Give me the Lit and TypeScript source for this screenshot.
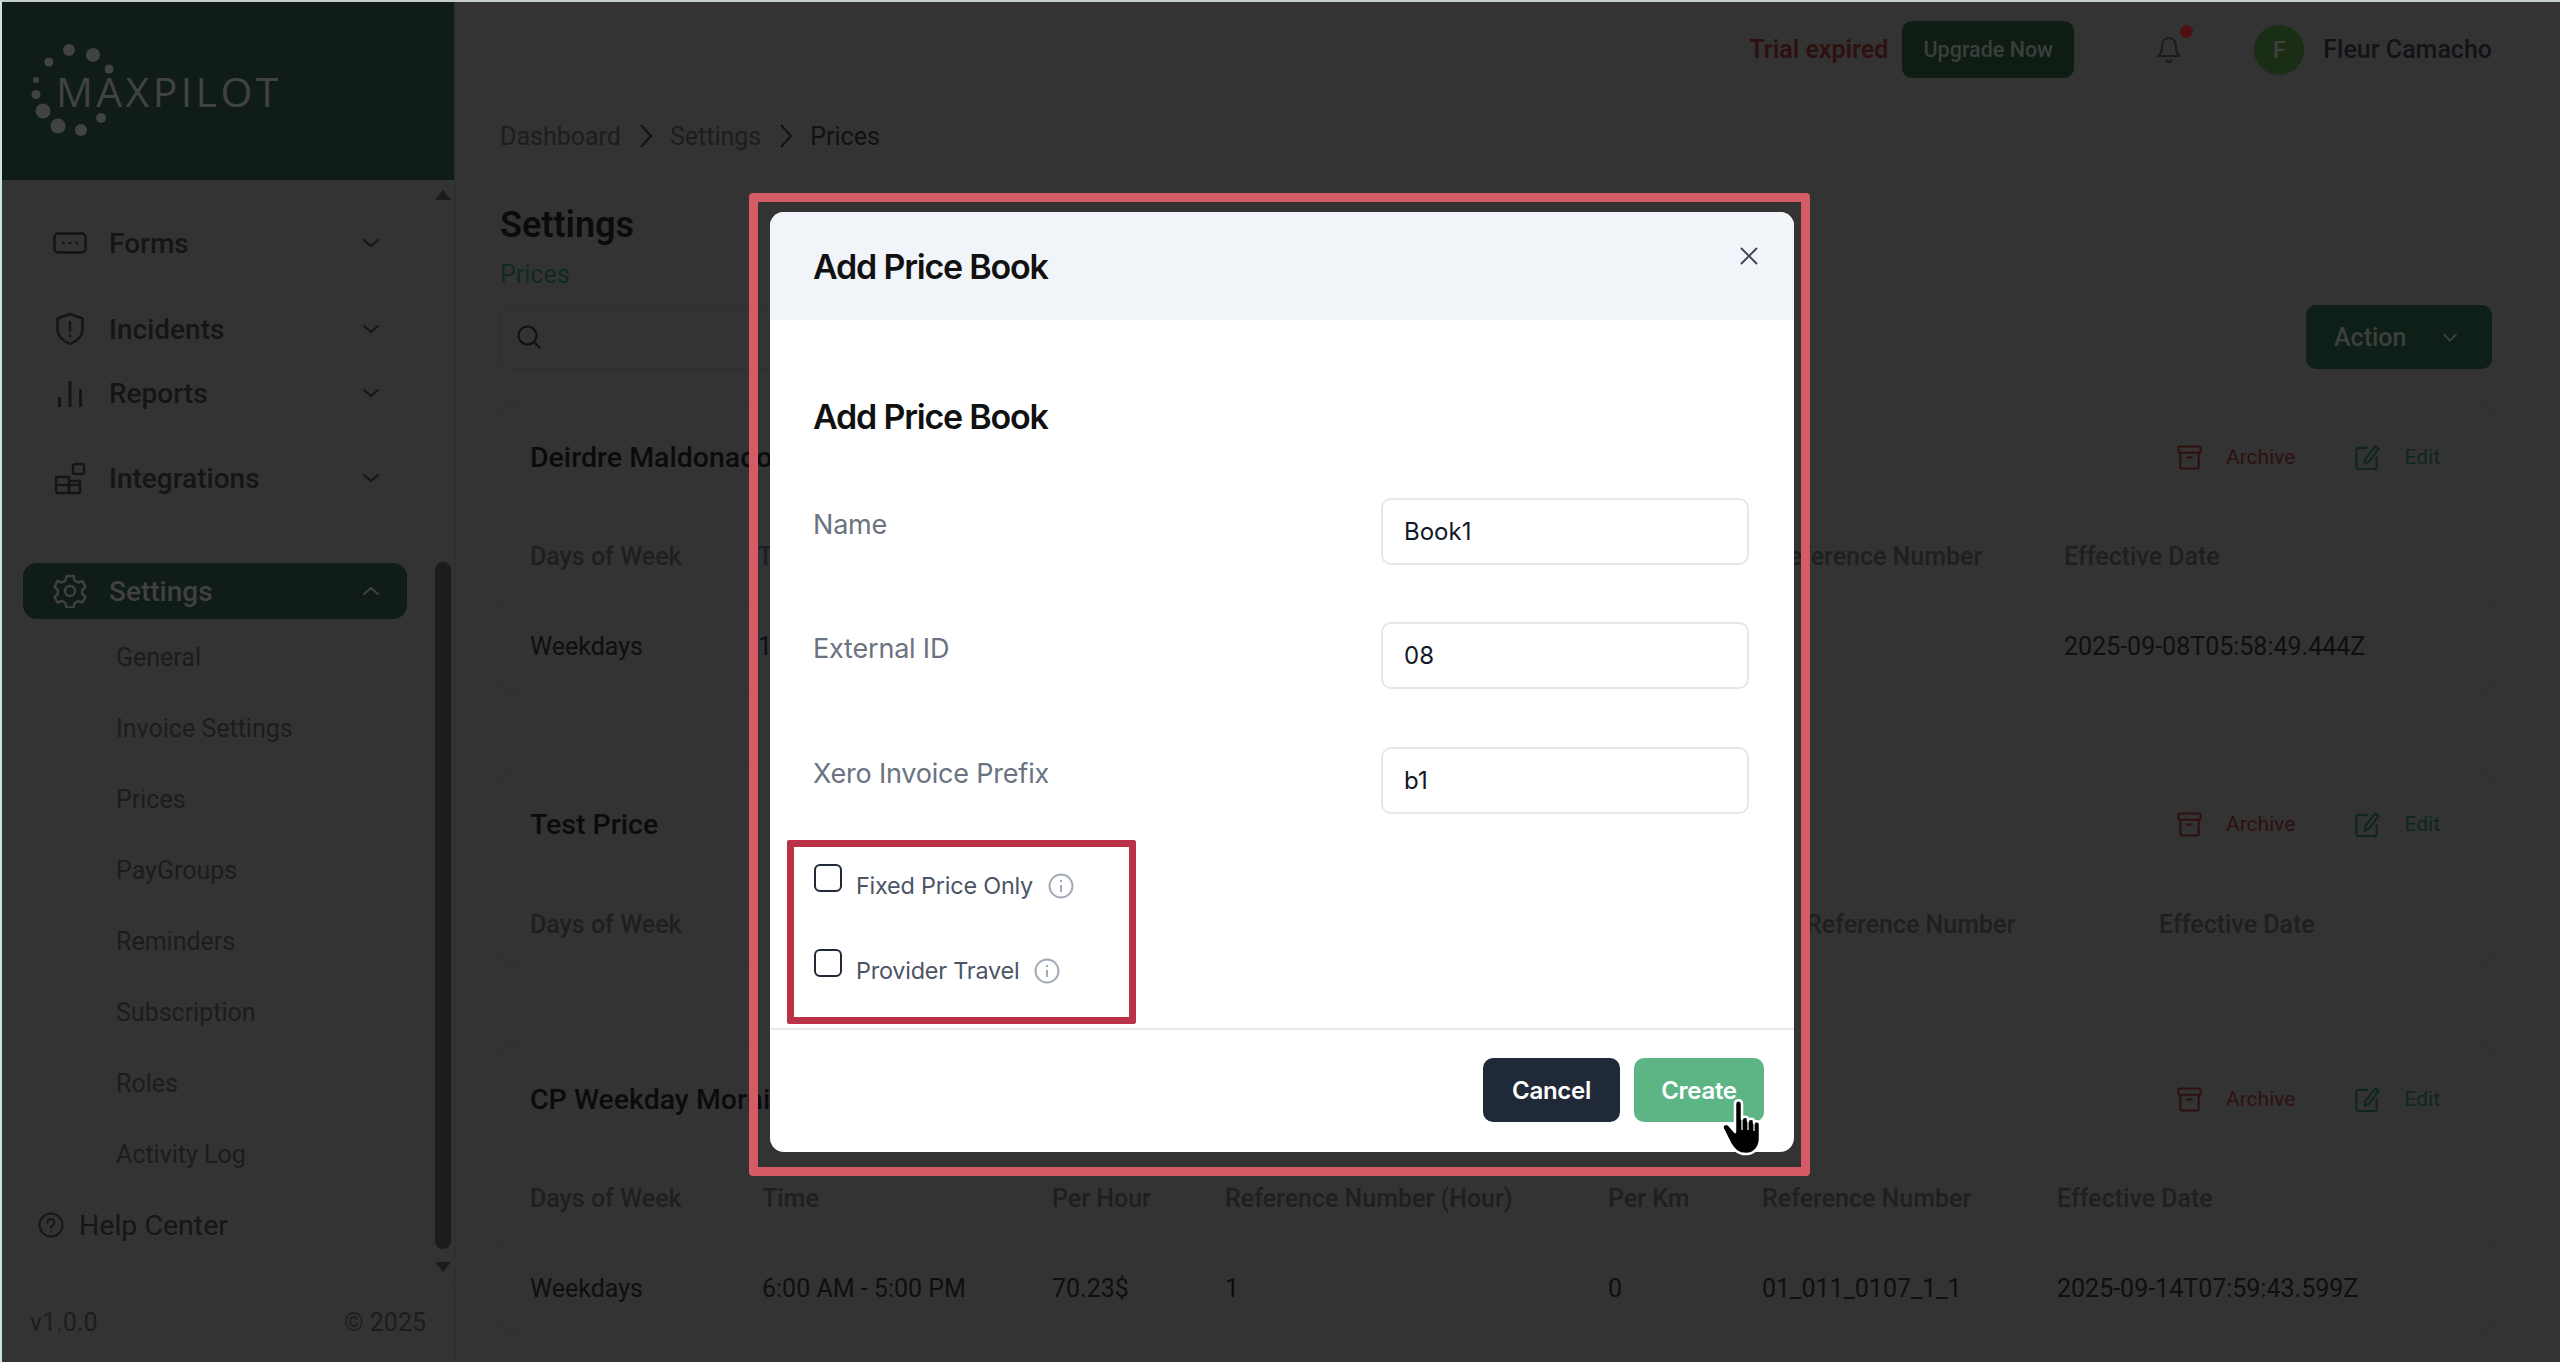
import { LitElement, html, css, svg } from "lit";
import { customElement } from "lit/decorators.js";

const chev = (up = false) => html`<svg class="chev" viewBox="0 0 20 20" fill="none" stroke="currentColor" stroke-width="2" stroke-linecap="round" stroke-linejoin="round"><path d=${up ? "M3 13l7-6 7 6" : "M3 7l7 6 7-6"}></path></svg>`;

const archiveIcon = html`<svg class="act-ic" viewBox="0 0 26 26" fill="none" stroke="currentColor" stroke-width="2.2" stroke-linejoin="round" stroke-linecap="round"><rect x="1.5" y="1.500" width="23" height="6.500" rx="1.5"></rect><path d="M3.500 8v14.500a2 2 0 0 0 2 2h15a2 2 0 0 0 2-2V8"></path><path d="M10.500 13h5"></path></svg>`;
const editIcon = html`<svg class="act-ic" viewBox="0 0 26 26" fill="none" stroke="currentColor" stroke-width="2.2" stroke-linejoin="round" stroke-linecap="round"><path d="M12 3H3.500a2 2 0 0 0-2 2v18a2 2 0 0 0 2 2h17a2 2 0 0 0 2-2V13"></path><path d="M21 1.500l3.500 2.500-10 13.500-4.500 2 .8-4.800z"></path></svg>`;
const info = html`<svg class="info" viewBox="0 0 26 26" fill="none" stroke="#a3aab8" stroke-width="2"><circle cx="13" cy="13" r="11.5"></circle><path d="M13 12v7" stroke-width="2"></path><circle cx="13" cy="8" r="1.2" fill="#a3aab8" stroke="none"></circle></svg>`;

const navIcons: Record<string, unknown> = {
  Forms: html`<svg class="nav-ic" viewBox="0 0 34 34" fill="none" stroke="currentColor" stroke-width="2.4" stroke-linecap="round"><rect x="1.5" y="7.500" width="31" height="19" rx="3.500"></rect><path d="M10 17h.5M16.800 17h.5M23.600 17h.5"></path></svg>`,
  Incidents: html`<svg class="nav-ic" viewBox="0 0 34 34" fill="none" stroke="currentColor" stroke-width="2.4" stroke-linecap="round" stroke-linejoin="round"><path d="M17 2l12.500 4.500v11c0 7-5.500 11.500-12.500 14.500-7-3-12.500-7.500-12.500-14.500v-11z"></path><path d="M17 10v9M17 23.500v.5"></path></svg>`,
  Reports: html`<svg class="nav-ic" viewBox="0 0 34 34" fill="none" stroke="currentColor" stroke-width="3" stroke-linecap="butt"><path d="M6.500 31v-10M17 31V5M27.500 31V13"></path></svg>`,
  Integrations: html`<svg class="nav-ic" viewBox="0 0 34 34" fill="none" stroke="currentColor" stroke-width="2.4" stroke-linejoin="round"><path d="M3 16h13v16H5a2 2 0 0 1-2-2z"></path><path d="M3 24h24"></path><path d="M16 24v8h9a2 2 0 0 0 2-2V20H16"></path><rect x="20" y="3" width="11" height="10" rx="2"></rect></svg>`,
  Settings: html`<svg class="nav-ic" viewBox="0 0 34 34" fill="none" stroke="currentColor" stroke-width="2.4" stroke-linejoin="round"><path d="M13.500 3h7l1 4.500 3.500 2 4.500-1.500 3 6-3.300 3v4l3.300 3-3 5.500-4.500-1.500-3.500 2-1 4.500h-7l-1-4.500-3.500-2-4.500 1.500-3-5.500 3.300-3v-4l-3.300-3 3-6 4.500 1.500 3.500-2z" transform="translate(0 -1)"></path><circle cx="17" cy="17" r="5"></circle></svg>`,
};

const dots: [number, number, number][] = [
  [68, 50, 6], [92, 55, 7], [48, 62, 4.5], [108, 69, 4.5], [35, 80, 3], [35, 94.5, 4.5], [42, 111, 7.5], [57, 126, 7.5], [80, 130, 6], [100, 118, 5],
];

interface Card {
  title: string;
  cols: [string, number][];
  row?: [string, number][];
  h: number;
}

const cards: Card[] = [
  {
    title: "Deirdre Maldonado",
    h: 293,
    cols: [["Days of Week", 29], ["Time", 257], ["Reference Number", 1272], ["Effective Date", 1563]],
    row: [["Weekdays", 29], ["1", 257], ["2025-09-08T05:58:49.444Z", 1563]],
  },
  {
    title: "Test Price",
    h: 199,
    cols: [["Days of Week", 29], ["Reference Number", 1305], ["Effective Date", 1658]],
  },
  {
    title: "CP Weekday Morning",
    h: 293,
    cols: [["Days of Week", 29], ["Time", 261], ["Per Hour", 551], ["Reference Number (Hour)", 724], ["Per Km", 1107], ["Reference Number", 1261], ["Effective Date", 1556]],
    row: [["Weekdays", 29], ["6:00 AM - 5:00 PM", 261], ["70.23$", 551], ["1", 724], ["0", 1107], ["01_011_0107_1_1", 1261], ["2025-09-14T07:59:43.599Z", 1556]],
  },
];

@customElement("app-root")
export class AppRoot extends LitElement {
  static styles = css`
    :host { display: block; width: 2560px; height: 1362px; overflow: hidden; position: relative; background: #333333; font-family: Roboto, "Liberation Sans", sans-serif; color: #111214; }
    * { box-sizing: border-box; }
    .page { display: flex; height: 1362px; border-top: 2px solid #c4ccce; border-left: 2px solid #cfe3de; }

    .side { width: 454px; flex: none; display: flex; flex-direction: column; border-right: 2px solid #303030; }
    .logo-box { height: 178px; flex: none; background: #101c17; }
    .logo { width: 300px; height: 178px; display: block; margin-left: -1px; }
    .logo-text { font-family: "Open Sans", sans-serif; font-size: 41px; letter-spacing: 3.400px; fill: #404341; font-weight: 500; }
    .side-body { flex: 1; position: relative; display: flex; flex-direction: column; min-height: 0; }
    .nav { flex: 1; display: flex; flex-direction: column; padding: 35px 0 0 21px; }
    .item { display: flex; align-items: center; width: 384px; height: 56px; padding: 0 26px 0 30px; font-size: 28px; font-weight: 500; color: #141517; border-radius: 14px; flex: none; }
    .item span { flex: 1; margin-left: 22px; }
    .nav-ic { width: 34px; height: 34px; flex: none; }
    .chev { width: 20px; height: 20px; flex: none; }
    .gap-a { margin-bottom: 30px; }
    .gap-b { margin-bottom: 8px; }
    .gap-c { margin-bottom: 29px; }
    .gap-d { margin-bottom: 57px; }
    .item.on { background: #101c17; color: #414141; margin-bottom: 3px; }
    .sub { height: 71px; display: flex; align-items: center; padding-left: 93px; font-size: 25px; color: #1b1c1e; flex: none; }
    .sub-list { display: flex; flex-direction: column; }
    .help { display: flex; align-items: center; gap: 15px; font-size: 28.500px; color: #151618; padding-left: 15px; height: 70px; flex: none; }
    .help svg { width: 26px; height: 26px; }
    .scroll { position: absolute; right: 3px; top: 0; bottom: 80px; width: 16px; }
    .arrow { position: absolute; left: 0; width: 0; height: 0; border-left: 8px solid transparent; border-right: 8px solid transparent; }
    .arrow.up { top: 10px; border-bottom: 10px solid #1c1c1c; }
    .arrow.down { bottom: 10px; border-top: 10px solid #1c1c1c; }
    .thumb { position: absolute; top: 382px; height: 687px; width: 16px; border-radius: 8px; background: #1c1c1c; }
    .foot { height: 80px; flex: none; border-top: 1px solid #303030; display: flex; justify-content: space-between; align-items: center; padding: 0 28px 0 28px; font-size: 25px; color: #1c1d1e; }

    .main { flex: 1; min-width: 0; display: flex; flex-direction: column; }
    .top { height: 96px; flex: none; border-bottom: 1px solid #303030; display: flex; align-items: center; padding: 0 68px 0 0; justify-content: flex-end; }
    .trial { color: #2e1010; font-weight: 600; font-size: 25px; margin-right: 14px; }
    .upgrade { width: 172px; height: 57px; border-radius: 10px; background: #0f1c14; color: #3b3f3c; display: flex; align-items: center; justify-content: center; font-size: 21.500px; font-weight: 500; }
    .bell { position: relative; margin-left: 82px; width: 26px; height: 30px; }
    .bell svg { width: 26px; height: 30px; display: block; }
    .bell i { position: absolute; top: -10px; right: -11px; width: 13px; height: 13px; border-radius: 50%; background: #4e1010; }
    .avatar { width: 50px; height: 50px; margin-left: 72px; border-radius: 50%; background: #1a2e16; color: #3f3f3f; display: flex; align-items: center; justify-content: center; font-size: 24px; font-weight: 500; }
    .uname { margin-left: 19px; font-size: 25px; font-weight: 500; color: #121318; }

    .content { padding: 0 68px 0 44px; flex: 1; }
    .crumbs { display: flex; align-items: center; height: 34px; margin-top: 21px; font-size: 25px; color: #1c1d1e; }
    .crumbs b { font-weight: 400; color: #101113; }
    .crumbs svg { width: 16px; height: 26px; margin: 0 16px 0 17px; color: #111214; }
    h1 { margin: 48px 0 0; font-size: 36px; line-height: 48px; font-weight: 600; color: #0a0b0c; }
    .subt { font-size: 25px; color: #10291e; margin-top: 12px; line-height: 28px; }
    .tools { display: flex; justify-content: space-between; margin-top: 16px; height: 64px; }
    .search { width: 640px; height: 64px; border: 1px solid #2e2e2e; border-radius: 10px; display: flex; align-items: center; padding-left: 14px; }
    .search svg { width: 28px; height: 28px; color: #111214; }
    .action { width: 186px; height: 64px; border-radius: 10px; background: #0e1f17; color: #3c3f3d; display: flex; align-items: center; font-size: 25px; font-weight: 500; padding-left: 28px; }
    .action svg { width: 18px; height: 18px; margin-left: 35px; }

    .card { position: relative; border: 1px solid #2f2f2f; border-radius: 14px; }
    .c0 { margin-top: 31px; }
    .c1 { margin-top: 74px; }
    .c2 { margin-top: 76px; }
    .card-head { display: flex; align-items: center; height: 112px; padding: 0 51px 0 29px; }
    .card-title { font-size: 28.500px; font-weight: 500; color: #0b0b0c; flex: 1; white-space: nowrap; }
    .act { display: flex; align-items: center; font-size: 21px; }
    .act-ic { width: 25px; height: 25px; margin-right: 24px; }
    .act.red { color: #2e1010; margin-right: 60px; }
    .act.green { color: #0f261b; }
    .tr { position: relative; }
    .tr.hd { height: 88px; border-bottom: 1px solid #2f2f2f; color: #1e1f21; font-weight: 500; font-size: 25px; }
    .tr.bd { font-size: 25px; color: #0e0f10; height: 91px; }
    .cell { position: absolute; top: 0; bottom: 0; display: flex; align-items: center; white-space: nowrap; }
    .c1 .tr.hd { border-bottom: none; }

    .frame { position: absolute; left: 749px; top: 193px; width: 1061px; height: 983px; border: 9px solid #d55b67; border-radius: 4px; }
    .modal { position: absolute; left: 770px; top: 212px; width: 1024px; height: 940px; background: #fff; border-radius: 14px; overflow: hidden; font-family: Inter, sans-serif; display: flex; flex-direction: column; }
    .m-head { height: 108px; flex: none; background: #f1f5f9; padding: 0 43px; display: flex; align-items: center; position: relative; }
    .m-title { font-size: 34px; font-weight: 600; color: #111; letter-spacing: -1.200px; }
    .x { position: absolute; right: 36px; top: 35px; width: 18px; height: 18px; }
    .m-body { flex: 1; padding: 77px 45px 0 43px; display: flex; flex-direction: column; position: relative; }
    .m-body .m-title { line-height: 40px; }
    .fields { display: flex; flex-direction: column; gap: 57.400px; margin-top: 61px; }
    .field { display: flex; justify-content: space-between; height: 67px; }
    .field label { font-size: 27px; color: #6b7280; line-height: 53px; letter-spacing: -0.200px; }
    .inp { width: 368px; height: 67px; border: 2px solid #e5e7eb; border-radius: 10px; padding-left: 21px; display: flex; align-items: center; font-size: 24px; color: #111827; }
    .checks { position: absolute; left: 17px; top: 520px; width: 349px; height: 184px; border: 7px solid #b93246; border-radius: 2px; padding: 17px 0 0 20px; display: flex; flex-direction: column; gap: 57px; }
    .chk { display: flex; align-items: flex-start; height: 28px; font-size: 23.400px; color: #4b5563; letter-spacing: -0.200px; }
    .box { width: 28px; height: 28px; border: 2px solid #1f2937; border-radius: 6px; flex: none; margin-right: 14px; }
    .chk span { line-height: 32px; margin-top: 6px; }
    .info { width: 26px; height: 26px; margin-left: 15px; margin-top: 9px; flex: none; }
    .m-foot { height: 124px; flex: none; border-top: 2px solid #e8eaed; display: flex; justify-content: flex-end; align-items: flex-start; gap: 14px; padding: 28px 30px 0 0; }
    .btn { height: 64px; border-radius: 10px; display: flex; align-items: center; justify-content: center; color: #fff; font-size: 24px; font-weight: 600; letter-spacing: -0.300px; }
    .cancel { width: 137px; background: #1f2937; }
    .create { width: 130px; background: #5db585; }
    .cursor { position: absolute; left: 1720px; top: 1098px; width: 44px; height: 60px; }
  `;

  private card(c: Card, i: number) {
    return html`<div class="card c${i}" style="height:${c.h}px">
      <div class="card-head">
        <div class="card-title">${c.title}</div>
        <div class="act red">${archiveIcon}Archive</div>
        <div class="act green">${editIcon}Edit</div>
      </div>
      <div class="tr hd">${c.cols.map(([t, x]) => html`<div class="cell" style="left:${x}px">${t}</div>`)}</div>
      ${c.row ? html`<div class="tr bd">${c.row.map(([t, x]) => html`<div class="cell" style="left:${x}px">${t}</div>`)}</div>` : ""}
    </div>`;
  }

  render() {
    const subs = ["General", "Invoice Settings", "Prices", "PayGroups", "Reminders", "Subscription", "Roles", "Activity Log"];
    return html`
      <div class="page">
        <aside class="side">
          <div class="logo-box">
            <svg class="logo" viewBox="0 0 300 178">
              ${dots.map(([x, y, r]) => svg`<circle cx=${x} cy=${y - 2} r=${r} fill="#404341"></circle>`)}
              <text class="logo-text" x="55" y="105">MAXPILOT</text>
            </svg>
          </div>
          <div class="side-body">
            <div class="nav">
              <div class="item gap-a">${navIcons.Forms}<span>Forms</span>${chev()}</div>
              <div class="item gap-b">${navIcons.Incidents}<span>Incidents</span>${chev()}</div>
              <div class="item gap-c">${navIcons.Reports}<span>Reports</span>${chev()}</div>
              <div class="item gap-d">${navIcons.Integrations}<span>Integrations</span>${chev()}</div>
              <div class="item on">${navIcons.Settings}<span>Settings</span>${chev(true)}</div>
              <div class="sub-list">${subs.map((s) => html`<div class="sub">${s}</div>`)}</div>
              <div class="help">
                <svg viewBox="0 0 26 26" fill="none" stroke="currentColor" stroke-width="2"><circle cx="13" cy="13" r="11.500"></circle><path d="M9.500 10.500a3.500 3.500 0 1 1 5.500 2.800c-1.200.8-2 1.400-2 2.700" stroke-linecap="round"></path><circle cx="13" cy="19.500" r="1" fill="currentColor" stroke="none"></circle></svg>
                Help Center
              </div>
            </div>
            <div class="scroll"><i class="arrow up"></i><div class="thumb"></div><i class="arrow down"></i></div>
            <div class="foot"><span>v1.0.0</span><span>© 2025</span></div>
          </div>
        </aside>
        <main class="main">
          <header class="top">
            <span class="trial">Trial expired</span>
            <div class="upgrade">Upgrade Now</div>
            <div class="bell">
              <svg viewBox="0 0 34 40" fill="none" stroke="#1a1b1d" stroke-width="2.800" stroke-linejoin="round" stroke-linecap="round"><path d="M17 4c-6 0-9 4.500-9 10 0 7-2 11-5 14h28c-3-3-5-7-5-14 0-5.500-3-10-9-10z"></path><path d="M14 34c1 2.500 5 2.500 6 0"></path></svg>
              <i></i>
            </div>
            <div class="avatar">F</div>
            <div class="uname">Fleur Camacho</div>
          </header>
          <div class="content">
            <div class="crumbs">
              <span>Dashboard</span>
              <svg viewBox="0 0 16 26" fill="none" stroke="currentColor" stroke-width="2"><path d="M3 2l10 11L3 24"></path></svg>
              <span>Settings</span>
              <svg viewBox="0 0 16 26" fill="none" stroke="currentColor" stroke-width="2"><path d="M3 2l10 11L3 24"></path></svg>
              <b>Prices</b>
            </div>
            <h1>Settings</h1>
            <div class="subt">Prices</div>
            <div class="tools">
              <div class="search"><svg viewBox="0 0 28 28" fill="none" stroke="currentColor" stroke-width="2.200" stroke-linecap="round"><circle cx="12.500" cy="12.500" r="9"></circle><path d="M19.500 19.500l5 5"></path></svg></div>
              <div class="action">Action <svg viewBox="0 0 20 20" fill="none" stroke="currentColor" stroke-width="2.200"><path d="M3 7l7 7 7-7"></path></svg></div>
            </div>
            ${cards.map((c, i) => this.card(c, i))}
          </div>
        </main>
      </div>
      <div class="frame"></div>
      <div class="modal">
        <div class="m-head">
          <div class="m-title">Add Price Book</div>
          <svg class="x" viewBox="0 0 18 18" fill="none" stroke="#374151" stroke-width="1.800" stroke-linecap="round"><path d="M1.500 1.500l15 15M16.500 1.500l-15 15"></path></svg>
        </div>
        <div class="m-body">
          <div class="m-title">Add Price Book</div>
          <div class="fields">
            <div class="field"><label>Name</label><div class="inp">Book1</div></div>
            <div class="field"><label>External ID</label><div class="inp">08</div></div>
            <div class="field"><label>Xero Invoice Prefix</label><div class="inp">b1</div></div>
          </div>
          <div class="checks">
            <div class="chk"><div class="box"></div><span>Fixed Price Only</span>${info}</div>
            <div class="chk"><div class="box"></div><span>Provider Travel</span>${info}</div>
          </div>
        </div>
        <div class="m-foot">
          <div class="btn cancel">Cancel</div>
          <div class="btn create">Create</div>
        </div>
      </div>
      <svg class="cursor" viewBox="0 0 44 60">
        <path d="M15 6c0-5 7-5 7 0v15c0-3 6-3 6 0v2c0-3 6-3 6 0v2c0-3 6-2 6 1v14c0 9-5 16-14 16-8 0-12-4-16-11L3 31c-2-4 3-7 6-4l6 7z" fill="#000" stroke="#fff" stroke-width="2.500" stroke-linejoin="round"></path>
        <path d="M22 22v10M28 24v8M34 26v7" stroke="#fff" stroke-width="1.200"></path>
      </svg>
    `;
  }
}
